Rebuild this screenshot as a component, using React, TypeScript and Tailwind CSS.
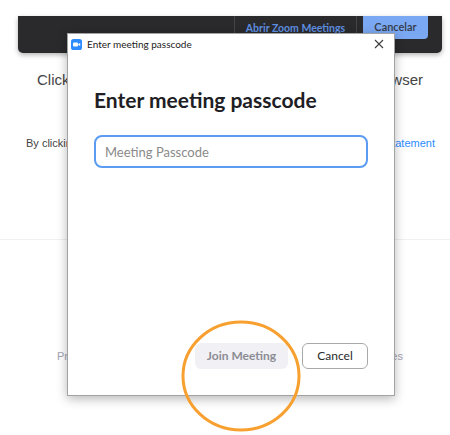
import React from 'react'

const ZoomIcon = () => (
  <svg width="11" height="11" viewBox="0 0 11 11">
    <rect x="0" y="0" width="11" height="11" rx="2.6" fill="#2d8cff" />
    <rect x="2" y="3.5" width="5" height="4" rx="1" fill="#fff" />
    <path d="M7.3 5.1 L9.2 3.9 V7.1 L7.3 5.9 Z" fill="#fff" />
  </svg>
)

const CloseIcon = () => (
  <svg width="10" height="10" viewBox="0 0 10 10">
    <path d="M1 1 L9 9 M9 1 L1 9" stroke="#3c3c3c" strokeWidth="1.1" fill="none" />
  </svg>
)

const PasscodeDialog = () => (
  <div className="absolute left-[67px] top-[33px] flex h-[363px] w-[328px] flex-col border border-[#a3a3a3] bg-white font-['Lato',sans-serif] shadow-[0_3px_10px_rgba(0,0,0,0.28)]">
    <div className="flex h-[20px] items-center pl-[3px] pr-[10px]">
      <ZoomIcon />
      <span className="ml-[5px] flex-1 text-[10px] text-[#222]">Enter meeting passcode</span>
      <CloseIcon />
    </div>
    <div className="px-[26px]">
      <h1 className="mt-[33px] text-[21px] leading-[25px] font-bold text-[#1e1e24]">Enter meeting passcode</h1>
      <input
        placeholder="Meeting Passcode"
        className="mt-[23px] h-[33px] w-full rounded-[8px] border-2 border-[#5b9cf2] px-[9px] text-[13px] outline-none placeholder:text-[#8a8a8a]"
      />
    </div>
    <div className="flex-1" />
    <div className="flex justify-end gap-[14px] pr-[26px] pb-[26px]">
      <button className="h-[26px] w-[93px] rounded-[6px] bg-[#f0f0f5] text-[12px] font-bold text-[#8c8c94]">Join Meeting</button>
      <button className="h-[26px] w-[66px] rounded-[6px] border border-[#a8a8a8] bg-white text-[12px] text-[#2a2a2a]">Cancel</button>
    </div>
  </div>
)

export default function App() {
  return (
    <div className="relative h-[435px] w-[450px] overflow-hidden bg-white font-['Liberation_Sans',Arial,sans-serif]">
      <div className="pt-[16px] pl-[18px] pr-[8px]">
        <div className="flex h-[37px] items-start justify-end rounded-b-[5px] bg-[#2a2a2d] pr-[14px] shadow-[0_2px_5px_rgba(0,0,0,0.3)]">
          <div className="flex h-full w-[123px] justify-center border-x border-[#444448] pt-[5px]">
            <span className="font-['Lato',sans-serif] text-[10.5px] font-bold text-[#5e8fe0]">Abrir Zoom Meetings</span>
          </div>
          <button className="ml-[6px] h-[23px] w-[65px] rounded-b-[4px] bg-[#7ba8f2] font-['Lato',sans-serif] text-[11px] font-semibold text-[#333a48]">
            Cancelar
          </button>
        </div>
      </div>

      <div className="mt-[17px] flex justify-between whitespace-nowrap pl-[37px] pr-[27px] text-[15px] leading-[20px] text-[#444]">
        <span>Click Open Zoom</span>
        <span>shown by your browser</span>
      </div>

      <div className="mt-[46px] flex justify-between whitespace-nowrap pl-[26px] pr-[15px] text-[11px] leading-[14px] text-[#444]">
        <span>By clicking "Launch Meeting",</span>
        <span>
          you agree to our <span className="text-[#2d8cff]">Privacy Statement</span>
        </span>
      </div>

      <div className="mt-[89px] border-t border-[#f0f0f0]" />

      <div className="mt-[109px] flex justify-between whitespace-nowrap pl-[57px] pr-[47px] text-[11px] leading-[14px] text-[#a3a3b3]">
        <span>Privacy</span>
        <span>Cookies</span>
      </div>

      <PasscodeDialog />

      <svg className="absolute left-[181px] top-[320px]" width="122" height="115" viewBox="0 0 122 115">
        <ellipse cx="60" cy="56" rx="58" ry="54" fill="none" stroke="#f7a030" strokeWidth="3" />
      </svg>
    </div>
  )
}
